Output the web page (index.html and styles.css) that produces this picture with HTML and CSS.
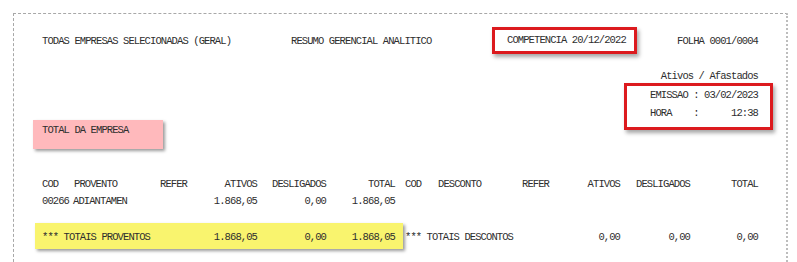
FILE: index.html
```
<!DOCTYPE html>
<html lang="pt">
<head>
<meta charset="utf-8">
<title>Resumo Gerencial Analitico</title>
<link rel="stylesheet" href="styles.css">
</head>
<body>
<div class="page">
  <div class="top">
    <span class="c-empresa">TODAS EMPRESAS SELECIONADAS (GERAL)</span>
    <span class="c-titulo">RESUMO GERENCIAL ANALITICO</span>
    <span class="mark comp">COMPETENCIA 20/12/2022</span>
    <span class="folha">FOLHA 0001/0004</span>
  </div>
  <div class="mid">
    <div class="empresa">TOTAL DA EMPRESA</div>
    <div class="info">
      <div class="sit">Ativos / Afastados</div>
      <div class="mark emissao">
        <div class="ln">EMISSAO : 03/02/2023</div>
        <div class="ln">HORA    :      12:38</div>
      </div>
    </div>
  </div>
  <div class="row">
    <div class="half l">
      <span>COD</span><span>PROVENTO</span><span>REFER</span>
      <span class="n">ATIVOS</span><span class="n">DESLIGADOS</span><span class="n">TOTAL</span>
    </div>
    <div class="half r">
      <span>COD</span><span>DESCONTO</span><span>REFER</span>
      <span class="n">ATIVOS</span><span class="n">DESLIGADOS</span><span class="n">TOTAL</span>
    </div>
  </div>
  <div class="row">
    <div class="half l">
      <span>00266</span><span class="desc">ADIANTAMEN</span><span></span>
      <span class="n">1.868,05</span><span class="n">0,00</span><span class="n">1.868,05</span>
    </div>
    <div class="half r"></div>
  </div>
  <div class="row tot">
    <div class="half l hl">
      <span class="lbl">*** TOTAIS PROVENTOS</span>
      <span class="n">1.868,05</span><span class="n">0,00</span><span class="n">1.868,05</span>
    </div>
    <div class="half r">
      <span class="lbl">*** TOTAIS DESCONTOS</span>
      <span class="n">0,00</span><span class="n">0,00</span><span class="n">0,00</span>
    </div>
  </div>
</div>
</body>
</html>
```
FILE: styles.css
```
html, body {
  margin: 0;
  padding: 0;
  background: #ffffff;
}

body {
  font-family: "Liberation Mono", "DejaVu Sans Mono", monospace;
  font-size: 10.5px;
  letter-spacing: -0.9px;
  color: #2e2e2e;
  overflow: hidden;
}

.page {
  margin: 13px 0 0 13px;
  width: 716px;
  height: 235px;
  padding: 13px 28px 0 28px;
  border-top: 1px dashed #a8a8a8;
  border-left: 1px dashed #a8a8a8;
  border-right: 2px dotted #bdbdbd;
}

.top {
  display: flex;
  align-items: center;
  height: 27px;
  white-space: pre;
}

.c-empresa { width: 249px; }
.c-titulo { width: 201px; }

.mark {
  border: 3px solid #dc1a1e;
  box-shadow: 2px 3px 4px rgba(0, 0, 0, 0.35);
  box-sizing: border-box;
}

.comp {
  width: 145px;
  height: 27px;
  padding-left: 12px;
  line-height: 21px;
}

.folha {
  flex: 1;
  text-align: right;
}

.mid {
  display: flex;
  justify-content: space-between;
  align-items: flex-start;
  margin-top: 16px;
  height: 79px;
}

.empresa {
  margin-top: 50px;
  margin-left: -9px;
  width: 130px;
  height: 29px;
  box-sizing: border-box;
  padding: 4px 0 0 9px;
  line-height: 12px;
  background: #ffb9bc;
  box-shadow: 2px 2px 3px rgba(0, 0, 0, 0.4);
  white-space: pre;
}

.info {
  display: flex;
  flex-direction: column;
}

.sit {
  line-height: 12px;
  text-align: right;
  white-space: pre;
}

.emissao {
  margin-top: 1px;
  margin-right: -15px;
  width: 149px;
  padding: 0 12px 5px 23px;
}

.ln {
  line-height: 18px;
  white-space: pre;
}

.row {
  display: flex;
  gap: 10px;
  line-height: 17px;
  white-space: pre;
}

.row:nth-child(3) { margin-top: 27px; }

.half {
  display: grid;
  align-content: start;
}

.half.l { grid-template-columns: 32px 86px 40px 57px 69px 69px; width: 353px; }
.half.r { grid-template-columns: 33px 84px 40px 58px 70px 68px; width: 353px; }

.n { text-align: right; }

.desc { margin-left: -1px; }

.lbl { grid-column: span 3; }

.tot { margin-top: 13px; }

.tot .half {
  padding: 6px 0 3px 0;
}

.tot .hl {
  margin: 0 -8px 0 -7px;
  padding: 6px 8px 3px 7px;
  background: #f9f46e;
  box-shadow: 2px 2px 3px rgba(0, 0, 0, 0.4);
}
```
